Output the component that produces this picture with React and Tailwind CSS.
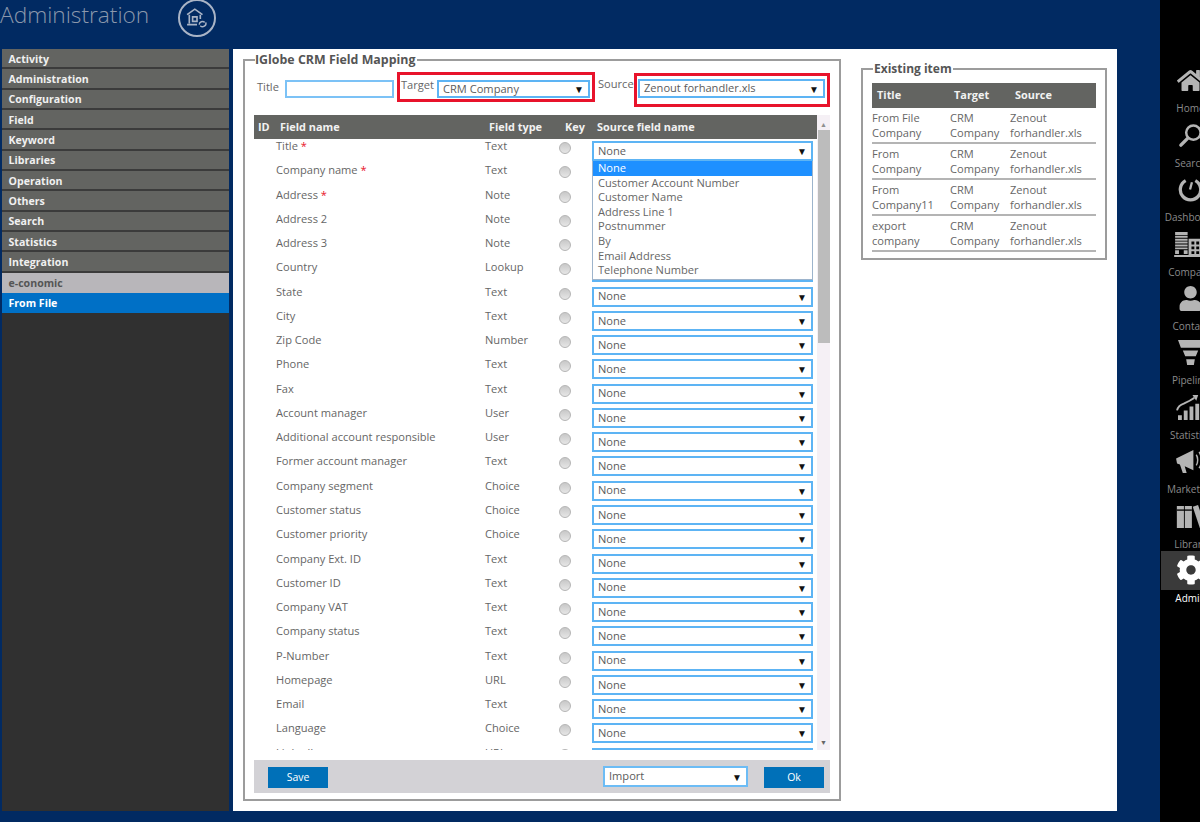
import { FaHome, FaUser, FaCog } from 'react-icons/fa'

const menu = ['Activity', 'Administration', 'Configuration', 'Field', 'Keyword', 'Libraries', 'Operation', 'Others', 'Search', 'Statistics', 'Integration']

const fields = [
  ['Title', 'Text', true],
  ['Company name', 'Text', true],
  ['Address', 'Note', true],
  ['Address 2', 'Note'],
  ['Address 3', 'Note'],
  ['Country', 'Lookup'],
  ['State', 'Text'],
  ['City', 'Text'],
  ['Zip Code', 'Number'],
  ['Phone', 'Text'],
  ['Fax', 'Text'],
  ['Account manager', 'User'],
  ['Additional account responsible', 'User'],
  ['Former account manager', 'Text'],
  ['Company segment', 'Choice'],
  ['Customer status', 'Choice'],
  ['Customer priority', 'Choice'],
  ['Company Ext. ID', 'Text'],
  ['Customer ID', 'Text'],
  ['Company VAT', 'Text'],
  ['Company status', 'Text'],
  ['P-Number', 'Text'],
  ['Homepage', 'URL'],
  ['Email', 'Text'],
  ['Language', 'Choice'],
  ['LinkedIn', 'URL'],
]

const options = ['Customer Account Number', 'Customer Name', 'Address Line 1', 'Postnummer', 'By', 'Email Address', 'Telephone Number']

const existing = ['From File Company', 'From Company', 'From Company11', 'export company']

function SearchGlass() {
  return (
    <svg viewBox="0 0 26 26" className="h-[25px] w-[25px]" fill="none" stroke="#b4b4b4">
      <circle cx="16" cy="10" r="7.500" strokeWidth="2.600" />
      <path d="M10 16 3 23" strokeWidth="3.600" strokeLinecap="round" />
    </svg>
  )
}

function Dashboard() {
  return (
    <svg viewBox="0 0 26 26" className="h-[25px] w-[25px]" fill="none" stroke="#b4b4b4" strokeWidth="3.400">
      <path d="M8 3.800a10.600 10.600 0 1 0 10 0" />
      <path d="M14.500 5.500 12.500 13" strokeWidth="2.400" />
    </svg>
  )
}

function Building() {
  return (
    <svg viewBox="0 0 34 26" className="h-[25px] w-[33px]" fill="#b4b4b4">
      <path d="M1 0h13v3H1zM1 4h13v2H1zM1 7h13v2H1zM1 10h13v2H1zM1 13h13v2H1zM1 16h13v2H1zM1 19h4v4H1zM10 19h4v4h-4z" />
      <path d="M0 24h34v2H0z" />
      <path fillRule="evenodd" d="M15 7h19v17H15zM18 10v3h3v-3zM23 10v3h3v-3zM28 10v3h3v-3zM18 15v3h3v-3zM23 15v3h3v-3zM28 15v3h3v-3zM18 20v3h3v-3zM23 20v3h3v-3zM28 20v3h3v-3z" />
    </svg>
  )
}

function Funnel() {
  return (
    <svg viewBox="0 0 26 26" className="h-[25px] w-[25px]" fill="#b4b4b4">
      <path d="M0 0h26l-3 8H3zM5 11h16l-2.500 6h-11zM8.500 20h9l-1 6h-7z" />
    </svg>
  )
}

function Chart() {
  return (
    <svg viewBox="0 0 30 26" className="h-[25px] w-[29px]" fill="#b4b4b4">
      <path d="M2 21h4v5H2zM8 16h4v10H8zM14 12h4v14h-4zM20 9h4v17h-4zM26 6h4v20h-4z" />
      <path d="M1 16c1-4 4-6 7-7l6-3 5-3" fill="none" stroke="#b4b4b4" strokeWidth="2" />
      <path d="M17 0h6l-2 6z" />
    </svg>
  )
}

function Megaphone() {
  return (
    <svg viewBox="0 0 30 26" className="h-[25px] w-[29px]" fill="#b4b4b4">
      <path d="M0 10 18 1v21L9 18l2 7H7L4 16l-3-1z" />
      <path d="M21 6c2 3 2 8 0 11M24 3c3 5 3 12 0 17M27 1c4 6 4 15 0 21" fill="none" stroke="#b4b4b4" strokeWidth="1.500" />
    </svg>
  )
}

function Books() {
  return (
    <svg viewBox="0 0 32 26" className="h-[23px] w-[30px]" fill="#b4b4b4">
      <path d="M0 1h8v25H0zM9 1h8v25H9z" />
      <path d="M18 2l6-2 8 24-6 2z" />
      <path d="M0 5h17v1.500H0z" fill="#000" />
    </svg>
  )
}

const rail = [
  ['Home', <FaHome key="h" className="h-[27px] w-[27px] text-[#b4b4b4]" />],
  ['Search', <SearchGlass key="s" />],
  ['Dashboard', <Dashboard key="d" />],
  ['Company', <Building key="c" />],
  ['Contact', <FaUser key="u" className="h-[25px] w-[25px] text-[#b4b4b4]" />],
  ['Pipeline', <Funnel key="p" />],
  ['Statistics', <Chart key="st" />],
  ['Marketing', <Megaphone key="m" />],
  ['Library', <Books key="l" />],
  ['Admin', <FaCog key="a" className="h-[30px] w-[30px] text-white" />],
]

function Select({ label, className }) {
  return (
    <div className={`flex items-center justify-between border-2 border-[#5db4f4] bg-white pl-[4px] pr-[4px] text-[#5c5c5c] ${className}`}>
      <span>{label}</span>
      <span className="text-[10px] leading-none text-[#111]">▼</span>
    </div>
  )
}

function Radio() {
  return <span className="block h-[12px] w-[12px] rounded-full border border-[#b5b5b5] bg-gradient-to-b from-[#c8c8c8] to-[#e6e6e6]" />
}

export default function App() {
  return (
    <div className="flex h-[822px] w-[1200px] overflow-hidden bg-[#012a62] font-['Open_Sans',sans-serif] text-[11.1px] text-[#666]">
      <div className="w-[1160px] shrink-0">
        <header className="flex h-[49px] items-start">
          <h1 className="w-[178px] text-[22.7px] font-light leading-[30px] text-[#8b98ac]">Administration</h1>
          <div className="grid h-[38px] w-[38px] -translate-y-[1px] place-items-center rounded-full border-2 border-[#a9b4c6] text-[#a9b4c6]">
            <svg viewBox="0 0 20 20" className="h-[22px] w-[22px]" fill="none" stroke="currentColor" strokeWidth="1.500">
              <path d="M1 7 8 2l7 5M3 7v8M13 7v4M1 16h9" />
              <path d="M6 9h4v4H6z" />
              <path d="M12 16a3 3 0 0 1 5-2M18 14a3 3 0 0 1-5 3" strokeWidth="1.300" />
            </svg>
          </div>
        </header>

        <div className="flex">
          <nav className="ml-[2px] h-[762px] w-[227px] bg-[#303030] text-[10.6px] font-bold">
            {menu.map((m) => (
              <div key={m} className="flex h-[20.35px] items-center border-b-2 border-[#3b3b3b] bg-[#636461] pl-[6.500px] pt-[3px] text-[#f0f0f0]">
                {m}
              </div>
            ))}
            <div className="flex h-[20.35px] items-center bg-[#b8b6ba] pl-[6.500px] pt-[1px] text-[#555]">e-conomic</div>
            <div className="flex h-[20.35px] items-center bg-[#0070c6] pl-[6.500px] pt-[1px] text-white">From File</div>
          </nav>

          <main className="ml-[4px] flex h-[762px] w-[884px] items-start bg-white">
            <fieldset className="ml-[10px] mt-[2px] h-[750px] w-[598px] border-2 border-[#9c9c9c] px-[9px]">
              <legend className="ml-[1px] h-[18px] bg-white pr-[2px] text-[12.4px] font-bold leading-[18px] text-[#555]">IGlobe CRM Field Mapping</legend>

              <div className="mt-[3px] flex h-[35px] items-start">
                <span className="mt-[7px] w-[31px] pl-[3px]">Title</span>
                <div className="mt-[8px] h-[18px] w-[109px] border-2 border-[#7cc2f6]" />
                <div className="ml-[3px] flex h-[30px] w-[198px] border-[3px] border-[#e8132b] pr-[2px]">
                  <span className="w-[37px] shrink-0 pl-[1px] leading-[20px]">Target</span>
                  <Select label="CRM Company" className="mt-[5px] h-[18px] flex-1" />
                </div>
                <span className="ml-[3px] w-[36px] leading-[24px]">Source</span>
                <div className="mt-[1px] flex h-[34px] w-[196px] items-start border-[3px] border-[#e8132b] pl-[1px] pr-[2px]">
                  <Select label="Zenout forhandler.xls" className="mt-[3px] h-[19px] flex-1" />
                </div>
              </div>

              <div className="mt-[8px] flex w-[576px]">
                <div className="w-[563px]">
                  <div className="flex h-[24px] items-center bg-[#636461] text-[10.9px] font-bold text-[#f2f2f2]">
                    <span className="w-[26px] pl-[4px]">ID</span>
                    <span className="w-[209px]">Field name</span>
                    <span className="w-[76px]">Field type</span>
                    <span className="w-[32px]">Key</span>
                    <span>Source field name</span>
                  </div>
                  <div className="relative h-[611px] overflow-hidden">
                    {fields.map(([name, type, req]) => (
                      <div key={name} className="flex h-[24.27px] items-start">
                        <span className="w-[231px] pl-[22px] leading-[14px]">
                          {name}
                          {req && <span className="text-[#e8132b]"> *</span>}
                        </span>
                        <span className="w-[74px] leading-[14px]">{type}</span>
                        <span className="w-[33px] pt-[3px]"><Radio /></span>
                        <Select label="None" className="mt-[2px] h-[20px] w-[221px]" />
                      </div>
                    ))}
                    <div className="absolute left-[338px] top-[22px] w-[221px] border border-t-0 border-[#9db4cc] bg-white pb-[1px] leading-[14.6px]">
                      <div className="h-[14.6px] bg-[#1e90ff] pl-[5px] text-white">None</div>
                      {options.map((o) => (
                        <div key={o} className="h-[14.6px] pl-[5px]">{o}</div>
                      ))}
                    </div>
                  </div>
                </div>
                <div className="flex w-[13px] flex-col items-center bg-[#f5f0f5]">
                  <span className="mt-[5px] h-[10px] text-[7px] leading-[10px] text-[#8f8f8f]">▲</span>
                  <div className="h-[213px] w-[12px] bg-[#bcbcbc]" />
                  <span className="mb-[2px] mt-auto text-[7px] leading-[10px] text-[#666]">▼</span>
                </div>
              </div>

              <div className="mt-[10px] flex h-[33px] w-[576px] items-center bg-[#d3d2d6] pl-[14px] pr-[6px]">
                <button className="mt-[2px] h-[21px] w-[60px] bg-[#0070b8] text-[10.5px] text-white">Save</button>
                <Select label="Import" className="ml-[275px] h-[21px] w-[145px] border-[#6cbcf5]" />
                <button className="ml-auto mt-[2px] h-[21px] w-[60px] bg-[#0070b8] text-[10.5px] text-white">Ok</button>
              </div>
            </fieldset>

            <fieldset className="ml-[20px] mt-[11px] h-[200px] w-[246px] border-2 border-[#9c9c9c] pl-[9px]">
              <legend className="ml-[1px] h-[18px] bg-white px-[1px] text-[12px] font-bold leading-[18px] text-[#555]">Existing item</legend>
              <div className="mt-[5px] w-[224px]">
                <div className="flex h-[25px] items-center bg-[#636461] text-[10.9px] font-bold text-[#f2f2f2]">
                  <span className="w-[82px] pl-[5px]">Title</span>
                  <span className="w-[61px]">Target</span>
                  <span>Source</span>
                </div>
                {existing.map((t) => (
                  <div key={t} className="flex h-[36px] items-center border-b-2 border-[#b4b4b4] leading-[15px]">
                    <span className="w-[78px]">{t}</span>
                    <span className="w-[60px]">CRM Company</span>
                    <span className="w-[86px]">Zenout forhandler.xls</span>
                  </div>
                ))}
              </div>
            </fieldset>
          </main>
        </div>
      </div>

      <aside className="w-[60px] shrink-0 bg-black pl-[1px] pt-[61.400px]">
        {rail.map(([label, icon]) => {
          const active = label === 'Admin'
          return (
            <div key={label} className="h-[54.400px] text-center">
              <div className={`flex h-[39px] items-center justify-center ${active ? 'bg-[#3a3a3a]' : ''}`}>{icon}</div>
              <div className={`mt-[1px] text-[10px] leading-[14px] ${active ? 'text-white' : 'text-[#8a8a8a]'}`}>{label}</div>
            </div>
          )
        })}
      </aside>
    </div>
  )
}
